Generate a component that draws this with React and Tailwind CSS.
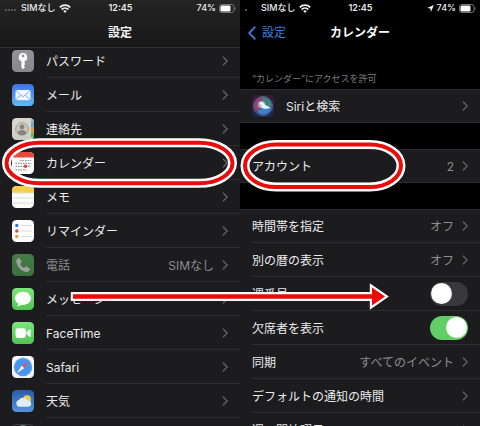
import { useId } from "react";

const Chevron = () => (
  <svg className="w-1.5 h-2.5 shrink-0" viewBox="0 0 6 10" fill="none" stroke="#66666a" strokeWidth="1.3">
    <path d="M1 0.7 5.2 5 1 9.3" />
  </svg>
);

const WifiIcon = () => (
  <svg className="w-3 h-[9px]" viewBox="0 0 12 9" fill="none" stroke="#f2f2f2" strokeWidth="1.8">
    <path d="M0.8 3.3a7.4 7.4 0 0 1 10.4 0" />
    <path d="M2.7 5.5a4.7 4.7 0 0 1 6.6 0" />
    <path d="M6 8.9 4.2 7.100a2.600 2.600 0 0 1 3.600 0z" fill="#f2f2f2" stroke="none" />
  </svg>
);

const BatteryIcon = () => (
  <svg className="w-[17px] h-[9px]" viewBox="0 0 17 9">
    <rect x="0.5" y="0.5" width="14.4" height="8" rx="2.2" fill="none" stroke="#77777a" />
    <rect x="1.5" y="1.5" width="10" height="6" rx="1.2" fill="#fff" />
    <path d="M15.7 3v3c1.3-.4 1.3-2.6 0-3z" fill="#77777a" />
  </svg>
);

const LocationIcon = () => (
  <svg className="w-[7px] h-[7px]" viewBox="0 0 7 7">
    <path d="M6.9 0.1 3.9 6.9 3.4 3.6 0.1 3.1z" fill="#f2f2f2" />
  </svg>
);

const AppIcon = ({ from, to = from, dim, children }) => {
  const id = useId();
  return (
    <svg className={dim ? "size-[22px] shrink-0 opacity-70" : "size-[22px] shrink-0"} viewBox="0 0 22 22">
      <defs>
        <linearGradient id={id} x1="0" y1="0" x2="0" y2="1">
          <stop stopColor={from} />
          <stop offset="1" stopColor={to} />
        </linearGradient>
        <clipPath id={id + "c"}>
          <rect width="22" height="22" rx="4.5" />
        </clipPath>
      </defs>
      <g clipPath={`url(#${id}c)`}>
        <rect width="22" height="22" fill={`url(#${id})`} />
        {children}
      </g>
    </svg>
  );
};

const icons = {
  key: (
    <AppIcon from="#929297" to="#88888d">
      <path
        fillRule="evenodd"
        fill="#fff"
        d="M11 3a4.2 4.2 0 0 0-1.6 8.1v6.3l1.7 1.8 1.9-2-1.2-1.4 1.3-1.3-.5-1.4V11.100A4.2 4.2 0 0 0 11 3zm0 1.600a1.300 1.300 0 1 1 0 2.600 1.300 1.300 0 0 1 0-2.600z"
      />
    </AppIcon>
  ),
  mail: (
    <AppIcon from="#3e73e8" to="#62b9f3">
      <rect x="3.5" y="6" width="15" height="10.3" rx="1.5" fill="#f4f9ff" />
      <path d="m4 6.600 6 5.500q1 .8 2 0l6-5.500M4 15.800l4.700-4.600M18 15.800l-4.700-4.600" fill="none" stroke="#5d9cee" strokeWidth="0.8" />
    </AppIcon>
  ),
  contacts: (
    <AppIcon from="#dad8cd" to="#cfcdc1">
      <rect x="19" width="3" height="4" fill="#b7b5aa" />
      <rect x="19" y="4" width="3" height="5.5" fill="#62acd8" />
      <rect x="19" y="9.5" width="3" height="5" fill="#e59a3d" />
      <rect x="19" y="14.5" width="3" height="5" fill="#6cb55f" />
      <circle cx="10" cy="11" r="6.3" fill="#c9c7bc" stroke="#9c9b92" strokeWidth="0.9" />
      <circle cx="10" cy="9" r="2.4" fill="#85847c" />
      <path d="M5.5 15.200c.6-4.200 8.400-4.200 9 0a6.300 6.300 0 0 1-9 0z" fill="#85847c" />
    </AppIcon>
  ),
  calendar: (
    <AppIcon from="#fbfbfb">
      <rect width="22" height="5.5" fill="#e5493d" />
      <path d="M8 8.500h11M3.500 11.400h15.500M3.500 14.300h15.500M3.500 17.800h11" stroke="#96969a" strokeWidth="1.2" strokeDasharray="1.6 0.9" />
      <circle cx="13.5" cy="14.3" r="1.7" fill="#e5392e" />
    </AppIcon>
  ),
  notes: (
    <AppIcon from="#fbfbf9">
      <rect width="22" height="6.7" fill="#f4cf4e" />
      <path d="M0 7.200h22" stroke="#c9c1a4" strokeWidth="0.7" strokeDasharray="0.7 0.7" />
      <path d="M0 12h22M0 17h22" stroke="#d6d6d6" strokeWidth="0.8" />
    </AppIcon>
  ),
  reminders: (
    <AppIcon from="#fdfdfd">
      <path d="M8.500 5.500H20M8.500 11H20M8.500 16.500H20" stroke="#d2d2d5" strokeWidth="0.8" />
      <circle cx="4.8" cy="5.5" r="1.7" fill="#3574dd" />
      <circle cx="4.8" cy="11" r="1.7" fill="#dc4b43" />
      <circle cx="4.8" cy="16.5" r="1.7" fill="#ef9c40" />
    </AppIcon>
  ),
  phone: (
    <AppIcon from="#56a658" to="#45964a" dim>
      <path
        d="M6.600 4.100c-1.300.6-2.500 1.800-2.300 3.600.6 4.900 5.100 9.500 10 10.200 1.700.2 3-.9 3.600-2.200.2-.5 0-.9-.3-1.200l-2.900-2c-.4-.3-.9-.2-1.200.1l-1.100 1.200c-.3.2-.6.200-.9 0-1.300-.8-2.500-2-3.200-3.200-.2-.3-.1-.6.1-.9l1.100-1.200c.3-.3.4-.8.1-1.200l-1.900-2.800c-.2-.4-.7-.6-1.100-.4z"
        fill="#d9d9d9"
      />
    </AppIcon>
  ),
  messages: (
    <AppIcon from="#7be679" to="#52c355">
      <path d="M11 3.700c-4.500 0-8 2.900-8 6.600 0 2.300 1.400 4.300 3.500 5.500-.1 1-.6 1.800-1.300 2.500 1.400-.1 2.700-.6 3.700-1.600.7.1 1.400.2 2.100.2 4.500 0 8-2.900 8-6.600s-3.500-6.600-8-6.600z" fill="#fff" />
    </AppIcon>
  ),
  facetime: (
    <AppIcon from="#7be679" to="#52c355">
      <rect x="3.5" y="6.3" width="10.3" height="9.6" rx="2.3" fill="#fff" />
      <path d="m14.500 10 3.200-2.600c.4-.3.900-.1.900.4v6.600c0 .5-.5.700-.9.400L14.500 12.200z" fill="#fff" />
    </AppIcon>
  ),
  safari: (
    <AppIcon from="#fbfbfb" to="#f0f0f0">
      <circle cx="11" cy="11" r="9.2" fill="#4695ec" />
      <circle cx="11" cy="11" r="8.2" fill="none" stroke="#8fc3f7" strokeWidth="0.8" strokeDasharray="0.5 0.7" />
      <path d="M17.300 4.700 9.800 9.800l2.400 2.400z" fill="#dc5a5c" />
      <path d="M4.700 17.300 9.800 9.800l2.400 2.400z" fill="#f3f3f3" />
    </AppIcon>
  ),
  weather: (
    <AppIcon from="#2b5cae" to="#5693dc">
      <circle cx="15" cy="9.2" r="3.9" fill="#f6cf51" />
      <path d="M7.300 16.800a3.400 3.400 0 0 1-.3-6.700 4.300 4.300 0 0 1 7.900.5 3.200 3.200 0 1 1 .9 6.200z" fill="#dfecfb" />
    </AppIcon>
  ),
  siri: (
    <AppIcon from="#3c1834" to="#162c52">
      <circle cx="11" cy="11" r="9.5" fill="#2c4463" stroke="#6f6a86" strokeWidth="0.8" />
      <path d="M2.200 11C2.500 5 7 1.800 11 2.200L11 11 5 16.500C3 15 2.200 13 2.200 11z" fill="#97456f" />
      <path d="M10 2.200c6-.4 9.800 4 9.800 8.800-3 .8-6 .3-9-1z" fill="#3d8580" />
      <path d="M5 16.500c4 4.800 13 4 14.800-5-5-.5-9.800.5-14.800 5z" fill="#3f7fd0" />
      <circle cx="9.5" cy="9.7" r="3.6" fill="#cfc3da" opacity="0.7" />
      <path d="M7 7.500c3-1.500 5.500.5 6.500 2.700 2 .6 3.500 1.300 4.800 2.600-2.500.8-4.500 1.600-7 .8C9 12.700 9 9.500 7 7.500z" fill="#e4f6fb" />
    </AppIcon>
  ),
  clock: (
    <AppIcon from="#3a3c3e" to="#101214">
      <rect x="1" y="1" width="20" height="20" rx="3.8" fill="#17191b" />
      <circle cx="11" cy="10" r="8" fill="none" stroke="#8ba3a6" strokeWidth="1.5" />
    </AppIcon>
  ),
};

const apps = [
  { icon: "key", label: "パスワード" },
  { icon: "mail", label: "メール" },
  { icon: "contacts", label: "連絡先" },
  { icon: "calendar", label: "カレンダー" },
  { icon: "notes", label: "メモ" },
  { icon: "reminders", label: "リマインダー" },
  { icon: "phone", label: "電話", value: "SIMなし", dim: true },
  { icon: "messages", label: "メッセージ" },
  { icon: "facetime", label: "FaceTime" },
  { icon: "safari", label: "Safari" },
  { icon: "weather", label: "天気" },
  { icon: "clock", label: "" },
];

const calendarOptions = [
  { label: "時間帯を指定", value: "オフ" },
  { label: "別の暦の表示", value: "オフ" },
  { label: "週番号", toggle: true, on: false },
  { label: "欠席者を表示", toggle: true, on: true },
  { label: "同期", value: "すべてのイベント" },
  { label: "デフォルトの通知の時間" },
  { label: "週の開始曜日" },
];

const StatusBar = ({ dots, location }) => (
  <div className="grid grid-cols-3 items-center h-4 pl-[5px] pr-1 text-[9px] font-medium text-[#ececec]">
    <div className="flex items-center gap-1">
      <div className="flex gap-px w-3 pt-1">
        {Array.from({ length: dots }, (_, i) => (
          <span key={i} className="size-0.5 rounded-full bg-[#68686b]" />
        ))}
      </div>
      <span className="whitespace-nowrap">SIMなし</span>
      <WifiIcon />
    </div>
    <span className="text-center font-semibold">12:45</span>
    <div className="flex items-center justify-end gap-[3px]">
      {location && <LocationIcon />}
      <span>74%</span>
      <BatteryIcon />
    </div>
  </div>
);

const Row = ({ icon, label, value, toggle, on, dim, last }) => {
  const Tag = toggle ? "label" : "button";
  return (
    <li>
      <Tag className="flex items-center gap-3 w-full h-[34px] pl-3 text-left text-xs text-[#ebebed]">
        {icon && icons[icon]}
        <span className={`flex flex-1 items-center h-full pr-3 border-b ${last ? "border-transparent" : "border-[#2e2e31]"}`}>
          <span className={`flex-1 pt-0.5 whitespace-nowrap ${dim ? "text-[#88888b]" : ""}`}>{label}</span>
          {value && <span className="pt-0.5 pr-2 text-[#8c8c91]">{value}</span>}
          {toggle ? (
            <input
              type="checkbox"
              defaultChecked={on}
              className="appearance-none flex items-center w-[38px] h-6 px-px rounded-full bg-[#39393d] checked:bg-[#62ce66] before:size-[21px] before:rounded-full before:bg-white checked:before:ml-auto"
            />
          ) : (
            <Chevron />
          )}
        </span>
      </Tag>
    </li>
  );
};

const Group = ({ rows }) => (
  <ul className="bg-[#1c1c1e] shadow-[inset_0_1px_#2c2c2f,inset_0_-1px_#2c2c2f]">
    {rows.map((row, i) => (
      <Row key={row.label} {...row} last={i === rows.length - 1} />
    ))}
  </ul>
);

// Red marker shapes drawn over both phones
const Annotations = () => (
  <svg className="absolute top-0 left-0 w-[480px] h-[426px] pointer-events-none" viewBox="0 0 480 426" fill="none">
    <g stroke="#fff" strokeWidth="9">
      <rect x="6.5" y="142.7" width="226" height="40.6" rx="33" ry="20.3" />
      <rect x="245" y="144.5" width="156" height="42.5" rx="31" ry="21.2" />
    </g>
    <g stroke="#ea0b0b" strokeWidth="4">
      <rect x="6.5" y="142.7" width="226" height="40.6" rx="33" ry="20.3" />
      <rect x="245" y="144.5" width="156" height="42.5" rx="31" ry="21.2" />
    </g>
    <path
      d="M73 294.200H372V287.500L385 296.500 372 305.500V298.800H73z"
      fill="#f00808"
      stroke="#fff"
      strokeWidth="4.4"
      style={{ paintOrder: "stroke" }}
    />
  </svg>
);

export default function App() {
  return (
    <div className="relative grid grid-cols-2 h-screen overflow-hidden bg-black font-['Inter','Noto_Sans_CJK_JP',sans-serif]">
      <section className="bg-[#1c1c1e] overflow-hidden">
        <header className="relative z-10 h-12 bg-linear-to-b from-[#242424] to-[#181818] border-b border-[#303032]">
          <StatusBar dots={4} />
          <h1 className="flex items-center justify-center h-8 pt-0.5 text-xs font-bold text-[#f2f2f2]">設定</h1>
        </header>
        <ul className="-mt-1">
          {apps.map((app) => (
            <Row key={app.icon} {...app} />
          ))}
        </ul>
      </section>

      <section className="overflow-hidden">
        <header className="h-12">
          <StatusBar dots={1} location />
          <div className="grid grid-cols-3 items-center h-8 pt-0.5 px-2 text-xs">
            <button className="flex items-center gap-1.5 text-[#3c7ddd]">
              <svg className="w-2 h-3.5" viewBox="0 0 8 14" fill="none" stroke="currentColor" strokeWidth="1.8">
                <path d="M7.300 0.700 1.200 7l6.100 6.300" />
              </svg>
              設定
            </button>
            <h1 className="text-center font-bold text-white whitespace-nowrap">カレンダー</h1>
          </div>
        </header>
        <h2 className="flex items-end h-[41px] pl-3 pb-1 text-[9px] text-[#7d7d82]">“カレンダー”にアクセスを許可</h2>
        <div className="flex flex-col gap-[26px]">
          <Group rows={[{ icon: "siri", label: "Siriと検索" }]} />
          <Group rows={[{ label: "アカウント", value: "2" }]} />
          <Group rows={calendarOptions} />
        </div>
      </section>

      <Annotations />
    </div>
  );
}
